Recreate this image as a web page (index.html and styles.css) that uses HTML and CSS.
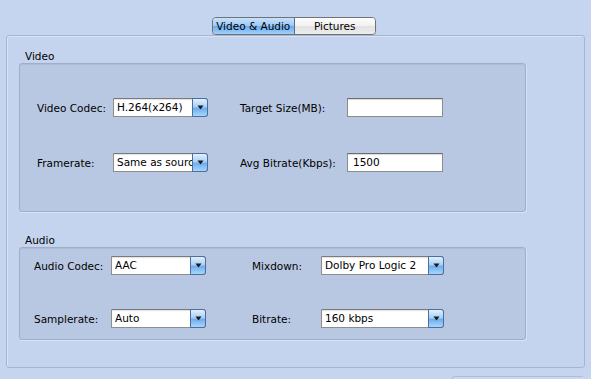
FILE: index.html
```html
<!DOCTYPE html>
<html>
<head>
<meta charset="utf-8">
<link rel="stylesheet" href="styles.css">
</head>
<body>
<div class="tabs">
  <div class="tab active">Video &amp; Audio</div>
  <div class="tab">Pictures</div>
</div>
<div class="panel">
  <div class="group-label">Video</div>
  <div class="box box-video">
    <div class="row">
      <span class="lbl lbl-v1">Video Codec:</span>
      <div class="select sel-s"><span class="val">H.264(x264)</span><span class="btn"><svg width="7" height="5" viewBox="0 0 7 5"><path d="M0.5 0.5h6l-3 4z" fill="#1a1a1a"/></svg></span></div>
      <span class="lbl lbl-v2">Target Size(MB):</span>
      <div class="input"></div>
    </div>
    <div class="row row2v">
      <span class="lbl lbl-v1">Framerate:</span>
      <div class="select sel-s"><span class="val">Same as source</span><span class="btn"><svg width="7" height="5" viewBox="0 0 7 5"><path d="M0.5 0.5h6l-3 4z" fill="#1a1a1a"/></svg></span></div>
      <span class="lbl lbl-v2">Avg Bitrate(Kbps):</span>
      <div class="input"><span class="val">1500</span></div>
    </div>
  </div>
  <div class="group-label audio-label">Audio</div>
  <div class="box box-audio">
    <div class="row">
      <span class="lbl lbl-a1">Audio Codec:</span>
      <div class="select sel-s"><span class="val">AAC</span><span class="btn"><svg width="7" height="5" viewBox="0 0 7 5"><path d="M0.5 0.5h6l-3 4z" fill="#1a1a1a"/></svg></span></div>
      <span class="lbl lbl-a2">Mixdown:</span>
      <div class="select sel-l"><span class="val">Dolby Pro Logic 2</span><span class="btn"><svg width="7" height="5" viewBox="0 0 7 5"><path d="M0.5 0.5h6l-3 4z" fill="#1a1a1a"/></svg></span></div>
    </div>
    <div class="row row2a">
      <span class="lbl lbl-a1">Samplerate:</span>
      <div class="select sel-s"><span class="val">Auto</span><span class="btn"><svg width="7" height="5" viewBox="0 0 7 5"><path d="M0.5 0.5h6l-3 4z" fill="#1a1a1a"/></svg></span></div>
      <span class="lbl lbl-a2">Bitrate:</span>
      <div class="select sel-l"><span class="val">160 kbps</span><span class="btn"><svg width="7" height="5" viewBox="0 0 7 5"><path d="M0.5 0.5h6l-3 4z" fill="#1a1a1a"/></svg></span></div>
    </div>
  </div>
</div>
<div class="footer-btn"></div>
</body>
</html>
```

FILE: styles.css
```css
html, body {
  margin: 0;
  padding: 0;
}
body {
  background: #c6d5ef;
  font-family: "DejaVu Sans", "Liberation Sans", sans-serif;
  font-size: 10px;
  color: #000;
  width: 591px;
  height: 379px;
  overflow: hidden;
}
.tabs {
  display: flex;
  width: 164px;
  height: 18px;
  margin: 17px 0 0 212px;
  box-sizing: border-box;
  border: 1px solid #6f7378;
  border-radius: 4px;
  overflow: hidden;
  box-shadow: 0 1px 1px rgba(0,0,0,0.15);
}
.tab {
  flex: 1;
  display: flex;
  align-items: center;
  justify-content: center;
  font-size: 10.5px;
  background: linear-gradient(#fdfdfd, #f0f0f0 50%, #e2e2e2 51%, #ececec);
}
.tab.active {
  border-right: 1px solid #5a6f8e;
  background: linear-gradient(#c9e1fa, #9cc8f5 50%, #6aacf0 51%, #9fd0fa);
}
.panel {
  box-sizing: border-box;
  margin: 0 6px;
  height: 333px;
  border: 1px solid #a6b5cf;
  border-radius: 3px;
  box-shadow: inset 1px 1px 0 rgba(255,255,255,0.35);
  background: #c5d4ee;
  padding: 13px 0 0 0;
}
.group-label {
  height: 14px;
  line-height: 14px;
  margin-left: 18px;
  font-size: 10.5px;
}
.audio-label {
  margin-top: 21px;
}
.box {
  box-sizing: border-box;
  margin-left: 12px;
  width: 507px;
  border: 1px solid #a0afc9;
  border-radius: 3px;
  background: #b9c8e2;
  box-shadow: inset 0 1px 1px rgba(0,0,0,0.06), 1px 1px 0 rgba(255,255,255,0.3);
}
.box-video {
  height: 149px;
  padding-top: 34px;
}
.box-audio {
  height: 93px;
  padding-top: 8px;
}
.row {
  display: flex;
  align-items: center;
  height: 19px;
}
.row2v { margin-top: 36px; }
.row2a { margin-top: 34px; }
.lbl {
  white-space: nowrap;
  font-size: 10.5px;
}
.lbl-v1 { width: 76px; padding-left: 17px; }
.lbl-v2 { width: 107px; margin-left: 32px; }
.lbl-a1 { width: 77px; padding-left: 14px; }
.lbl-a2 { width: 69px; margin-left: 46px; }
.select {
  position: relative;
  box-sizing: border-box;
  height: 19px;
  display: flex;
  align-items: stretch;
  background: #fff;
  border: 1px solid #8d8d8d;
  border-top-color: #7a7a7a;
  border-radius: 0 3px 3px 0;
  box-shadow: inset 0 1px 1px rgba(0,0,0,0.12);
}
.sel-s { width: 95px; }
.sel-l { width: 123px; }
.val {
  flex: 1;
  overflow: hidden;
  white-space: nowrap;
  padding-left: 3px;
  line-height: 17px;
  font-size: 10.5px;
}
.btn {
  width: 14px;
  margin: -1px -1px -1px 0;
  border: 1px solid #4b6e9f;
  border-radius: 0 3px 3px 0;
  background: linear-gradient(#e3f0fd, #a9d0f7 45%, #6daeef 55%, #a8d6fb);
  display: flex;
  align-items: center;
  justify-content: center;
}
.input {
  box-sizing: border-box;
  width: 96px;
  height: 19px;
  background: #fff;
  border: 1px solid #8d8d8d;
  border-top-color: #6e6e6e;
  box-shadow: inset 0 1px 1px rgba(0,0,0,0.15);
  display: flex;
}
.input .val { padding-left: 5px; }
.footer-btn {
  margin: 8px 0 0 452px;
  width: 130px;
  height: 4px;
  border-top: 1px solid #b0bdd6;
  border-left: 1px solid #b0bdd6;
  border-radius: 3px 0 0 0;
  background: #c9d7f0;
}
```
